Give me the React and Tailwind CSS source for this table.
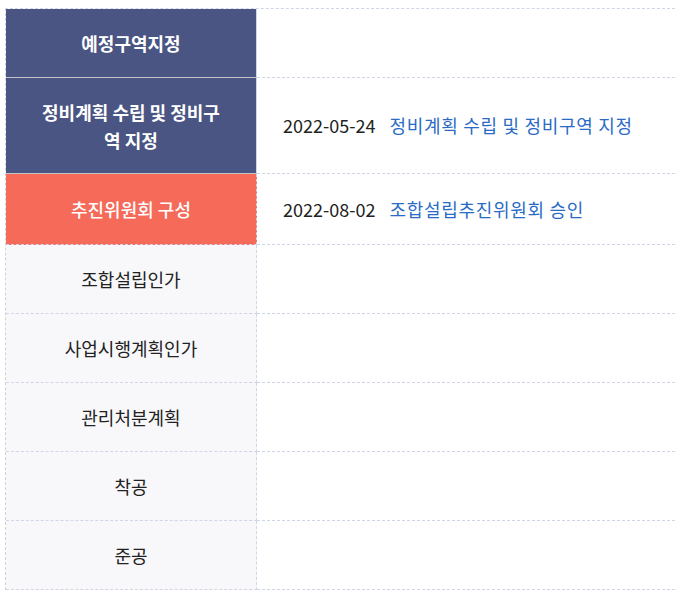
const rows = [
  { label: '예정구역지정', tone: 'blue', h: 'h-[69px]' },
  { label: '정비계획 수립 및 정비구역 지정', tone: 'blue', h: 'h-[96px]', date: '2022-05-24', text: '정비계획 수립 및 정비구역 지정' },
  { label: '추진위원회 구성', tone: 'red', h: 'h-[71px]', date: '2022-08-02', text: '조합설립추진위원회 승인' },
  { label: '조합설립인가', h: 'h-[69px]' },
  { label: '사업시행계획인가', h: 'h-[69px]' },
  { label: '관리처분계획', h: 'h-[69px]' },
  { label: '착공', h: 'h-[69px]' },
  { label: '준공', h: 'h-[69px]' },
];

function StepRow({ row }) {
  const cellTone =
    row.tone === 'blue'
      ? 'bg-[#4a5583] text-white font-bold border-[#c4c4c8] border-solid'
      : row.tone === 'red'
        ? 'bg-[#f56a59] text-white font-medium border-[#cfd6ea] border-dashed'
        : 'bg-[#f8f8fa] text-[#222] border-[#cfd6ea] border-dashed';

  return (
    <div className={`flex ${row.h}`}>
      <div
        className={`w-[251px] shrink-0 flex items-center justify-center px-[28px] text-center text-[18px] leading-[28px] border-b border-r border-r-dashed border-r-[#cfd6ea] ${cellTone}`}
      >
        {row.label}
      </div>
      <div className="flex-1 flex items-center pl-[26px] text-[18px] border-b border-dashed border-[#cfd6ea] bg-white">
        {row.date && (
          <>
            <span className="text-[#222]">{row.date}</span>
            <span className="ml-[14px] tracking-[0.7px] text-[#2a6bc6]">{row.text}</span>
          </>
        )}
      </div>
    </div>
  );
}

export default function App() {
  return (
    <div className="w-[675px] h-[590px] bg-white overflow-hidden font-['Noto_Sans_CJK_KR',sans-serif]">
      <div className="pt-[8px] pl-[5px]">
        <div className="border-t border-dashed border-[#cfd6ea] border-l border-l-solid border-l-[#cfd1d8]">
          {rows.map((row) => (
            <StepRow key={row.label} row={row} />
          ))}
        </div>
      </div>
    </div>
  );
}
